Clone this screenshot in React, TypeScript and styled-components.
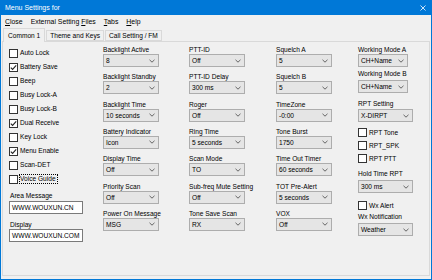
import React from 'react';
import styled, { createGlobalStyle } from 'styled-components';

const Global = createGlobalStyle`
  body {
    margin: 0;
    font-family: "Liberation Sans", Arial, sans-serif;
    color: #000;
  }
`;

const Window = styled.div`
  width: 432px;
  height: 280px;
  box-sizing: border-box;
  border: 1px solid #0078d7;
  border-top: none;
  background: #f0f0f0;
  display: flex;
  flex-direction: column;
  overflow: hidden;
`;

const TitleBar = styled.div`
  height: 15px;
  flex-shrink: 0;
  background: #0078d7;
  color: #fff;
  display: flex;
  align-items: center;
  justify-content: space-between;
  padding: 0 5px 0 4px;
  font-size: 7px;
`;

const MenuBar = styled.div`
  height: 13px;
  flex-shrink: 0;
  display: flex;
  align-items: center;
  gap: 8px;
  padding-left: 4px;
  font-size: 6.9px;
`;

const TabStrip = styled.div`
  height: 13px;
  flex-shrink: 0;
  display: flex;
  align-items: flex-end;
  padding-left: 2px;
  position: relative;
  z-index: 1;
`;

const Tab = styled.div<{ $active?: boolean }>`
  box-sizing: border-box;
  height: ${p => (p.$active ? 14 : 11)}px;
  margin-bottom: ${p => (p.$active ? -1 : 0)}px;
  padding: 0 ${p => (p.$active ? 4 : 3)}px;
  margin-left: ${p => (p.$active ? 0 : 1)}px;
  border: 1px solid #d9d9d9;
  border-bottom: ${p => (p.$active ? 'none' : '1px solid #d9d9d9')};
  background: #f0f0f0;
  font-size: 6.6px;
  display: flex;
  align-items: center;
  padding-top: ${p => (p.$active ? 0 : 0)}px;
`;

const Panel = styled.div`
  flex: 1;
  margin: 0 1px 3px 1px;
  border: 1px solid #d9d9d9;
  display: grid;
  grid-template-columns: 94px 86px 87px 82px 1fr;
  align-items: start;
  padding: 4px 0 0 6px;
  font-size: 6.6px;
`;

const Column = styled.div`
  display: flex;
  flex-direction: column;
`;

const FieldColumn = styled.div`
  display: flex;
  flex-direction: column;
  gap: 6.33px;
`;

const CheckRow = styled.div<{ $h?: number; $mt?: number }>`
  display: flex;
  align-items: center;
  gap: 2px;
  height: ${p => p.$h ?? 14}px;
  margin-top: ${p => p.$mt ?? 0}px;
  white-space: nowrap;
`;

const Box = styled.div`
  width: 9px;
  height: 9px;
  box-sizing: border-box;
  border: 1px solid #333;
  background: #fff;
  display: flex;
  align-items: center;
  justify-content: center;
`;

const CheckText = styled.span<{ $focus?: boolean }>`
  line-height: 8px;
  outline: ${p => (p.$focus ? '1px dotted #000' : 'none')};
  outline-offset: 0;
  padding: 0 1px 0 0;
`;

const Label = styled.div<{ $mt?: number; $indent?: number }>`
  height: 8px;
  line-height: 8px;
  margin-top: ${p => p.$mt ?? 0}px;
  padding-left: ${p => p.$indent ?? 0}px;
  white-space: nowrap;
`;

const Field = styled.div<{ $mt?: number }>`
  display: flex;
  flex-direction: column;
  margin-top: ${p => p.$mt ?? 0}px;
`;

const Combo = styled.div<{ $w?: number; $mt?: number }>`
  width: ${p => p.$w ?? 56}px;
  height: 13px;
  margin-top: ${p => p.$mt ?? 0}px;
  box-sizing: border-box;
  border: 1px solid #adadad;
  background: #e5e5e5;
  display: flex;
  align-items: center;
  justify-content: space-between;
  padding: 0 3px 0 2px;
  white-space: nowrap;
`;

const TextBox = styled.div<{ $mt?: number }>`
  width: 74px;
  height: 13px;
  margin-top: ${p => p.$mt ?? 0}px;
  box-sizing: border-box;
  border: 1px solid #7a7a7a;
  background: #fff;
  display: flex;
  align-items: center;
  padding-left: 2px;
  white-space: nowrap;
`;

const Chevron = () => (
  <svg width="6" height="4" viewBox="0 0 6 4">
    <polyline points="0.5,0.8 3,3.2 5.5,0.8" fill="none" stroke="#555" strokeWidth="0.9" />
  </svg>
);

const Tick = () => (
  <svg width="7" height="7" viewBox="0 0 7 7">
    <polyline points="0.8,3.6 2.6,5.4 6.2,1.4" fill="none" stroke="#222" strokeWidth="1.1" />
  </svg>
);

const Check = ({ text, checked, focus, h, mt }: { text: string; checked?: boolean; focus?: boolean; h?: number; mt?: number }) => (
  <CheckRow $h={h} $mt={mt}>
    <Box>{checked && <Tick />}</Box>
    <CheckText $focus={focus}>{text}</CheckText>
  </CheckRow>
);

const Select = ({ value, w, mt }: { value: string; w?: number; mt?: number }) => (
  <Combo $w={w} $mt={mt}>
    <span>{value}</span>
    <Chevron />
  </Combo>
);

const columns: [string, string][][] = [
  [
    ['Backlight Active', '8'],
    ['Backlight Standby', '2'],
    ['Backlight Time', '10 seconds'],
    ['Battery Indicator', 'Icon'],
    ['Display Time', 'Off'],
    ['Priority Scan', 'Off'],
    ['Power On Message', 'MSG'],
  ],
  [
    ['PTT-ID', 'Off'],
    ['PTT-ID Delay', '300 ms'],
    ['Roger', 'Off'],
    ['Ring Time', '5 seconds'],
    ['Scan Mode', 'TO'],
    ['Sub-freq Mute Setting', 'Off'],
    ['Tone Save Scan', 'RX'],
  ],
  [
    ['Squelch A', '5'],
    ['Squelch B', '5'],
    ['TimeZone', '-0:00'],
    ['Tone Burst', '1750'],
    ['Time Out Timer', '60 seconds'],
    ['TOT Pre-Alert', '5 seconds'],
    ['VOX', 'Off'],
  ],
];

const checks: [string, boolean][] = [
  ['Auto Lock', false],
  ['Battery Save', true],
  ['Beep', false],
  ['Busy Lock-A', false],
  ['Busy Lock-B', false],
  ['Dual Receive', true],
  ['Key Lock', false],
  ['Menu Enable', true],
  ['Scan-DET', false],
];

const App = () => {
  return (
    <>
      <Global />
      <Window>
        <TitleBar>
          <span>Menu Settings for</span>
          <svg width="6" height="6" viewBox="0 0 6 6">
            <path d="M0.5 0.5 L5.5 5.5 M5.5 0.5 L0.5 5.5" stroke="#fff" strokeWidth="0.8" />
          </svg>
        </TitleBar>
        <MenuBar>
          <span><u>C</u>lose</span>
          <span>External Setting <u>F</u>iles</span>
          <span><u>T</u>abs</span>
          <span><u>H</u>elp</span>
        </MenuBar>
        <TabStrip>
          <Tab $active>Common 1</Tab>
          <Tab>Theme and Keys</Tab>
          <Tab>Call Setting / FM</Tab>
        </TabStrip>
        <Panel>
          <Column>
            {checks.map(([t, c]) => (
              <Check key={t} text={t} checked={c} />
            ))}
            <Check text="Voice Guide" focus />
            <Label $mt={6} $indent={1}>Area Message</Label>
            <TextBox $mt={1}>WWW.WOUXUN.CN</TextBox>
            <Label $mt={7} $indent={1}>Display</Label>
            <TextBox>WWW.WOUXUN.COM</TextBox>
          </Column>
          {columns.map((col, i) => (
            <FieldColumn key={i}>
              {col.map(([l, v]) => (
                <Field key={l}>
                  <Label>{l}</Label>
                  <Select value={v} />
                </Field>
              ))}
            </FieldColumn>
          ))}
          <Column>
            <Field>
              <Label>Working Mode A</Label>
              <Select value="CH+Name" w={50} />
            </Field>
            <Field $mt={3}>
              <Label>Working Mode B</Label>
              <Select value="CH+Name" w={50} mt={2} />
            </Field>
            <Field $mt={7}>
              <Label>RPT Setting</Label>
              <Select value="X-DIRPT" w={55} mt={1} />
            </Field>
            <Check text="RPT Tone" h={13} mt={4} />
            <Check text="RPT_SPK" h={13} />
            <Check text="RPT PTT" h={13} />
            <Field $mt={5}>
              <Label>Hold Time RPT</Label>
              <Select value="300 ms" w={55} mt={2} />
            </Field>
            <Check text="Wx Alert" h={13} mt={6} />
            <Field $mt={1}>
              <Label>Wx Notification</Label>
              <Select value="Weather" w={55} mt={2} />
            </Field>
          </Column>
        </Panel>
      </Window>
    </>
  );
};

export default App;
